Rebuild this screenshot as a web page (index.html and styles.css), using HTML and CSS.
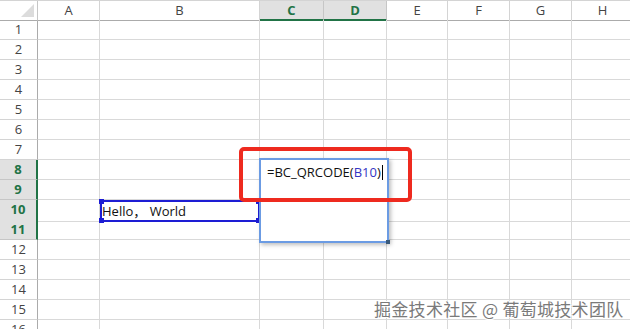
FILE: index.html
```html
<!DOCTYPE html>
<html>
<head>
    <link rel="stylesheet" href="styles.css">
</head>
<body>

<div class="sheet">
  <div class="row head">
    <div class="corner"><span class="tri"></span></div>
    <div class="ch">A</div>
    <div class="ch">B</div>
    <div class="ch on">C</div>
    <div class="ch on">D</div>
    <div class="ch">E</div>
    <div class="ch">F</div>
    <div class="ch">G</div>
    <div class="ch">H</div>
  </div>
  <div class="row"><div class="rh">1</div><div class="c"></div><div class="c"></div><div class="c"></div><div class="c"></div><div class="c"></div><div class="c"></div><div class="c"></div><div class="c"></div></div>
  <div class="row"><div class="rh">2</div><div class="c"></div><div class="c"></div><div class="c"></div><div class="c"></div><div class="c"></div><div class="c"></div><div class="c"></div><div class="c"></div></div>
  <div class="row"><div class="rh">3</div><div class="c"></div><div class="c"></div><div class="c"></div><div class="c"></div><div class="c"></div><div class="c"></div><div class="c"></div><div class="c"></div></div>
  <div class="row"><div class="rh">4</div><div class="c"></div><div class="c"></div><div class="c"></div><div class="c"></div><div class="c"></div><div class="c"></div><div class="c"></div><div class="c"></div></div>
  <div class="row"><div class="rh">5</div><div class="c"></div><div class="c"></div><div class="c"></div><div class="c"></div><div class="c"></div><div class="c"></div><div class="c"></div><div class="c"></div></div>
  <div class="row"><div class="rh">6</div><div class="c"></div><div class="c"></div><div class="c"></div><div class="c"></div><div class="c"></div><div class="c"></div><div class="c"></div><div class="c"></div></div>
  <div class="row"><div class="rh">7</div><div class="c"></div><div class="c"></div><div class="c"></div><div class="c"></div><div class="c"></div><div class="c"></div><div class="c"></div><div class="c"></div></div>
  <div class="row"><div class="rh on">8</div><div class="c"></div><div class="c"></div><div class="c"></div><div class="c"></div><div class="c"></div><div class="c"></div><div class="c"></div><div class="c"></div></div>
  <div class="row"><div class="rh on">9</div><div class="c"></div><div class="c"></div><div class="c"></div><div class="c"></div><div class="c"></div><div class="c"></div><div class="c"></div><div class="c"></div></div>
  <div class="row"><div class="rh on">10</div><div class="c"></div><div class="c val">Hello，&nbsp;World</div><div class="c"></div><div class="c"></div><div class="c"></div><div class="c"></div><div class="c"></div><div class="c"></div></div>
  <div class="row"><div class="rh on">11</div><div class="c"></div><div class="c"></div><div class="c"></div><div class="c"></div><div class="c"></div><div class="c"></div><div class="c"></div><div class="c"></div></div>
  <div class="row"><div class="rh">12</div><div class="c"></div><div class="c"></div><div class="c"></div><div class="c"></div><div class="c"></div><div class="c"></div><div class="c"></div><div class="c"></div></div>
  <div class="row"><div class="rh">13</div><div class="c"></div><div class="c"></div><div class="c"></div><div class="c"></div><div class="c"></div><div class="c"></div><div class="c"></div><div class="c"></div></div>
  <div class="row"><div class="rh">14</div><div class="c"></div><div class="c"></div><div class="c"></div><div class="c"></div><div class="c"></div><div class="c"></div><div class="c"></div><div class="c"></div></div>
  <div class="row"><div class="rh">15</div><div class="c"></div><div class="c"></div><div class="c"></div><div class="c"></div><div class="c"></div><div class="c"></div><div class="c"></div><div class="c"></div></div>
  <div class="row"><div class="rh">16</div><div class="c"></div><div class="c"></div><div class="c"></div><div class="c"></div><div class="c"></div><div class="c"></div><div class="c"></div><div class="c"></div></div>

  <!-- reference selection around B10 -->
  <div class="refsel">
    <span class="hd tl"></span><span class="hd tr"></span>
    <span class="hd bl"></span><span class="hd br"></span>
  </div>

  <!-- in-cell editor over C8:D11 -->
  <div class="editor">
    <span class="formula">=BC_QRCODE(<span class="ref">B10</span>)</span><span class="caret"></span>
    <span class="fill"></span>
  </div>

  <div class="mark"></div>

  <div class="wm">掘金技术社区 @ 葡萄城技术团队</div>
</div>

</body>
</html>
```

FILE: styles.css
```css
* {box-sizing: border-box}
body {
  margin: 0;
  background: #fff;
  font-family: "Open Sans", "Noto Sans", sans-serif;
  overflow: hidden;
}

.sheet {
  position: relative;
  width: 630px;
  height: 329px;
  overflow: hidden;
  border-top: 1px solid #d4d4d4;
}

.row {
  display: grid;
  grid-template-columns: 38px 62px 160px 64px 63px 61px 62px 62px 62px;
  height: 20px;
}

.head {
  height: 19px;
}

.c {
  border-right: 1px solid #d9d9d9;
  border-bottom: 1px solid #d9d9d9;
}

.corner {
  position: relative;
  border-right: 1px solid #c6c6c6;
  border-bottom: 1px solid #ababab;
}

.tri {
  position: absolute;
  right: 3px;
  bottom: 3px;
  width: 0;
  height: 0;
  border-left: 13px solid transparent;
  border-bottom: 13px solid #dcdcdc;
}

.ch {
  border-right: 1px solid #d4d4d4;
  border-bottom: 1px solid #ababab;
  color: #444;
  font-size: 13px;
  line-height: 18px;
  text-align: center;
}

.ch.on {
  background: #e1e1e1;
  border-right-color: #c6c6c6;
  border-bottom: 2px solid #217346;
  color: #217346;
  font-weight: bold;
}

.rh {
  border-right: 1px solid #ababab;
  border-bottom: 1px solid #d4d4d4;
  color: #444;
  font-size: 13px;
  line-height: 19px;
  text-align: center;
}

.rh.on {
  background: #e1e1e1;
  border-right: 2px solid #217346;
  border-bottom-color: #c6c6c6;
  color: #217346;
  font-weight: bold;
}

.val {
  font-size: 13px;
  line-height: 20px;
  padding: 1px 0 0 2px;
  color: #111;
  white-space: nowrap;
  font-family: "Open Sans", "Noto Sans CJK SC", sans-serif;
}

.refsel {
  position: absolute;
  left: 100px;
  top: 199px;
  width: 160px;
  height: 22px;
  border: 2px solid #1d1dd4;
}

.hd {
  position: absolute;
  width: 5px;
  height: 5px;
  background: #1d1dd4;
}
.hd.tl {left: -3px; top: -3px;}
.hd.tr {right: -3px; top: -3px;}
.hd.bl {left: -3px; bottom: -3px;}
.hd.br {right: -3px; bottom: -3px;}

.editor {
  position: absolute;
  left: 259px;
  top: 157px;
  width: 130px;
  height: 85px;
  background: #fff;
  border: 2px solid #6b9be3;
  box-shadow: 2px 2px 4px rgba(0, 0, 0, 0.25);
  padding: 4px 0 0 6px;
  font-size: 13px;
  line-height: 16px;
  color: #111;
  white-space: nowrap;
}

.ref {
  color: #3535c4;
}

.caret {
  display: inline-block;
  width: 1px;
  height: 15px;
  margin-left: 1px;
  background: #000;
  vertical-align: -3px;
}

.fill {
  position: absolute;
  right: -3px;
  bottom: -3px;
  width: 4px;
  height: 4px;
  background: #3a5a7a;
}

.mark {
  position: absolute;
  left: 239px;
  top: 146px;
  width: 173px;
  height: 55px;
  border: 4px solid #ee2a1f;
  border-radius: 5px;
}

.wm {
  position: absolute;
  left: 374px;
  top: 297px;
  font-family: "Noto Sans CJK SC", sans-serif;
  font-size: 17px;
  letter-spacing: 0.3px;
  line-height: 22px;
  color: #7a7a7a;
  text-shadow: 1px 1px 0 #fff, -1px -1px 0 #fff, 1px -1px 0 #fff, -1px 1px 0 #fff;
  white-space: nowrap;
}
```
